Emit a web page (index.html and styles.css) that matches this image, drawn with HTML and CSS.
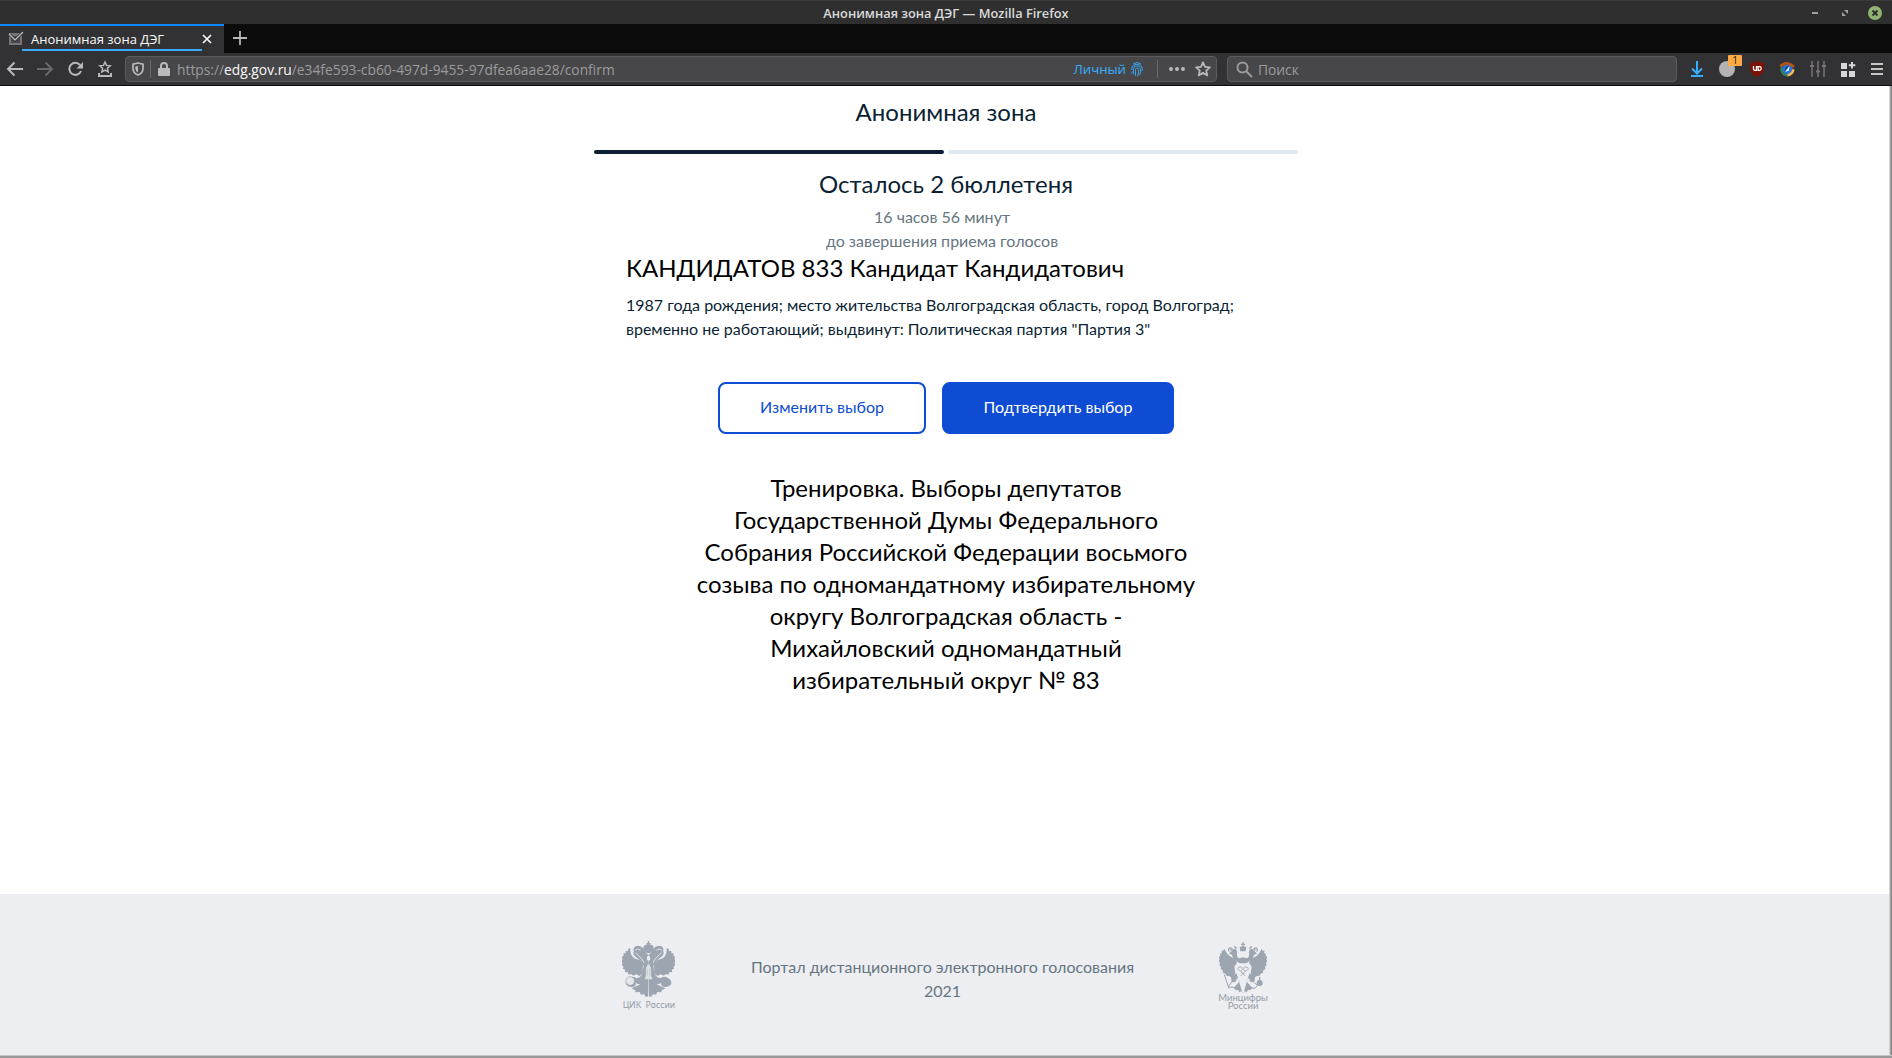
FILE: index.html
```html
<!DOCTYPE html>
<html lang="ru">
<head>
    <meta charset="UTF-8">
    <meta name="viewport" content="width=device-width, initial-scale=1.0">
    <title>Анонимная зона ДЭГ</title>
    <link rel="stylesheet" href="styles.css">
</head>
<body>
    <div class="window">
        <header class="titlebar">
            <span class="window-title">Анонимная зона ДЭГ — Mozilla Firefox</span>
            <div class="window-buttons">
                <svg width="14" height="14" viewBox="-3 0 14 14"><path d="M1 7h6" stroke="#a0a0a0" stroke-width="2"/></svg>
                <svg width="14" height="14" viewBox="-3 0 14 14"><path d="M3 4h4v4zM1 6v4h4z" fill="#a0a0a0"/></svg>
                <svg width="14" height="14" viewBox="0 0 14 14"><circle cx="7" cy="7" r="7" fill="#92b372"/><path d="M4.5 4.5l5 5m0-5l-5 5" stroke="#2b2b2b" stroke-width="1.8"/></svg>
            </div>
        </header>

        <div class="tabbar">
            <div class="tab">
                <svg class="favicon" width="17" height="16" viewBox="0 0 17 16"><path d="M1 2h13v12H1z" fill="#77757a"/><path d="M3 5h9v7H3z" fill="#4a484c"/><path d="M2 4l5 5 7-7" fill="none" stroke="#2a2a2a" stroke-width="3"/><path d="M1 3l6 6 8-8" fill="none" stroke="#b5b5b5" stroke-width="1.5"/></svg>
                <span class="tab-title">Анонимная зона ДЭГ</span>
                <svg width="12" height="12" viewBox="0 0 12 12"><path d="M2 2l8 8m0-8l-8 8" stroke="#f9f9fa" stroke-width="1.7"/></svg>
            </div>
            <svg class="new-tab" width="14" height="14" viewBox="0 0 14 14"><path d="M7 0v14M0 7h14" stroke="#b9b9ba" stroke-width="1.8"/></svg>
        </div>

        <nav class="navbar">
            <div class="nav-buttons">
                <svg width="18" height="16" viewBox="0 0 18 16"><path d="M17 8H2M8.500 1.500L2 8l6.500 6.500" fill="none" stroke="#b9b9ba" stroke-width="2"/></svg>
                <svg width="18" height="16" viewBox="0 0 18 16"><path d="M0 8h15M8.500 1.500L15 8l-6.500 6.500" fill="none" stroke="#68686a" stroke-width="2"/></svg>
                <svg width="16" height="16" viewBox="0 0 16 16"><path d="M12 4A6 6 0 1 0 13 10" fill="none" stroke="#b9b9ba" stroke-width="2"/><path d="M15 1v6.500H8.500z" fill="#b9b9ba"/></svg>
                <svg width="16" height="18" viewBox="0 0 16 18"><path d="M8 2l1.500 3.400 3.700.4-2.800 2.500.8 3.700L8 10.100 4.800 12l.8-3.700-2.800-2.500 3.700-.4z" fill="none" stroke="#b9b9ba" stroke-width="1.500"/><path d="M2 13v3h12v-3" fill="none" stroke="#b9b9ba" stroke-width="2"/></svg>
            </div>
            <div class="urlbar">
                <svg width="12" height="14" viewBox="0 0 12 14"><path d="M6 1l5 1.200v4.300Q11 11 6 13 1 11 1 6.500V2.200z" fill="none" stroke="#b9b9ba" stroke-width="1.700"/><path d="M6 4v6.500Q3.300 9 3.300 6.500V4.500z" fill="#b9b9ba"/></svg>
                <span class="divider"></span>
                <svg width="12" height="14" viewBox="0 0 12 14"><rect y="6" width="12" height="8" rx="1" fill="#b9b9ba"/><path d="M3 7V4a3 3 0 0 1 6 0v3" fill="none" stroke="#b9b9ba" stroke-width="2"/></svg>
                <span class="url">https://<b>edg.gov.ru</b>/e34fe593-cb60-497d-9455-97dfea6aae28/confirm</span>
                <span class="container-label">Личный</span>
                <svg width="12" height="15" viewBox="0 0 12 15" fill="none" stroke="#37adff" stroke-width=".9"><path d="M2 2Q6-1 10 2M.8 8V6.500a5.200 4.200 0 0 1 10.400 0V9M2.500 12.500V6.800a3.500 3 0 0 1 7 0V10l-1 3M4.500 14V7.500a1.500 1.500 0 0 1 3 0V11l-1 3.500M.8 9.500v2"/></svg>
                <span class="divider wide"></span>
                <svg width="16" height="4" viewBox="0 0 16 4" fill="#b9b9ba"><circle cx="2" cy="2" r="2"/><circle cx="8" cy="2" r="2"/><circle cx="14" cy="2" r="2"/></svg>
                <svg class="bookmark" width="16" height="16" viewBox="0 0 16 16"><path d="M8 1.300l2 4.500 4.900.5-3.700 3.300 1.100 4.800L8 11.900l-4.300 2.500 1.100-4.800L1.100 6.300l4.900-.5z" fill="none" stroke="#b9b9ba" stroke-width="1.800" stroke-linejoin="round"/></svg>
            </div>
            <div class="searchbar">
                <svg width="17" height="17" viewBox="0 0 17 17"><circle cx="6.500" cy="6.500" r="5" fill="none" stroke="#9b9b9d" stroke-width="2"/><path d="M10 10l6 6" stroke="#9b9b9d" stroke-width="2"/></svg>
                <span>Поиск</span>
            </div>
            <div class="extensions">
                <svg width="14" height="18" viewBox="0 0 14 18"><path d="M7 1v12M2 8.500l5 5 5-5M1 16h12" fill="none" stroke="#37adff" stroke-width="2"/></svg>
                <span class="blocker">
                    <svg width="16" height="16" viewBox="0 0 16 16"><circle cx="8" cy="8" r="8" fill="#b5b2b5"/></svg>
                    <span class="badge">1</span>
                </span>
                <span class="shield">
                    <svg width="14" height="16" viewBox="0 0 14 16"><path d="M7 0q3 1.500 7 2v5q0 6-7 9-7-3-7-9V2q4-.5 7-2z" fill="#7c1105"/><path d="M3.500 5v3q0 1.300 1.500 1.300h1.500V5M8 5.700h1.500a1.700 1.800 0 0 1 0 3.600H8.200z" fill="none" stroke="#fff" stroke-width="1.300"/></svg>
                </span>
                <svg width="16" height="16" viewBox="0 0 16 16"><circle cx="8.500" cy="8.500" r="5.300" fill="#2a72dc"/><path d="M3 6a6 6 0 0 0 5.500 8.300" fill="none" stroke="#2d8062" stroke-width="2.500"/><path d="M8.500 14.300q5-.5 6-6" fill="none" stroke="#f4b950" stroke-width="2.500"/><path d="M1.500 5.500Q7-1 15 6" fill="none" stroke="#b5531c" stroke-width="2.800"/><path d="M10 4.500L5 11l2-5z" fill="#14375e"/><path d="M10.500 5L6 11l4-1.500z" fill="#e5f3ff"/></svg>
                <svg width="16" height="16" viewBox="0 0 16 16" fill="none" stroke="#77717b" stroke-width="2"><path d="M2 0v16M8 0v16M14 0v16" stroke-width="1.500"/><path d="M0 5h4M6 10.500h4M12 5h4"/></svg>
                <svg width="15" height="15" viewBox="0 0 15 15"><path d="M0 1h6v6H0zM0 9h6v6H0zM8 9h6v6H8z" fill="#d7d7db"/><path d="M11 0v6.500M7.800 3.200h6.500" stroke="#d7d7db" stroke-width="2"/></svg>
                <svg width="12" height="14" viewBox="0 0 12 14"><path d="M0 2h12M0 7h12M0 12h12" stroke="#c5c5c1" stroke-width="2"/></svg>
            </div>
        </nav>

        <main class="page">
            <h1 class="zone-title">Анонимная зона</h1>
            <div class="progress">
                <span class="step active"></span>
                <span class="step"></span>
            </div>
            <h2 class="remaining">Осталось 2 бюллетеня</h2>
            <p class="timer">16 часов 56 минут<br>до завершения приема голосов</p>

            <section class="candidate">
                <h3>КАНДИДАТОВ 833 Кандидат Кандидатович</h3>
                <p>1987 года рождения; место жительства Волгоградская область, город Волгоград;<br>временно не работающий; выдвинут: Политическая партия "Партия 3"</p>
            </section>

            <div class="actions">
                <button class="button outline">Изменить выбор</button>
                <button class="button primary">Подтвердить выбор</button>
            </div>

            <p class="election">Тренировка. Выборы депутатов<br>Государственной Думы Федерального<br>Собрания Российской Федерации восьмого<br>созыва по одномандатному избирательному<br>округу Волгоградская область -<br>Михайловский одномандатный<br>избирательный округ № 83</p>
        </main>

        <footer class="footer">
            <div class="logo cik">
                <svg width="53" height="56" viewBox="0 0 158 168" fill="#9da6b0">
                    <defs>
                        <g id="cik-half">
                            <path d="M79 42Q89 38 95 22q10-12 23-6 8 5 5 15 5 9-5 16L96 64l-2 14 6 24q4 8 14 10 9-9 23-2 13 8 10 20-8 10-23 7-10-4-6-12-7 5-15 5l27 12-13 7 2 5-14-1-3 8-10-1-5 8-7-2z"/>
                            <path d="M95 62l12-6q16-2 22-12 6-10 4-22l7 1 1 8 6-2 1 8 6 0v8l5 2-2 8 4 5-4 6 3 6-6 5 2 6-7 3 1 7-9 1-2 7-8-2-6 5-9-4-11 5-8-9z"/>
                        </g>
                    </defs>
                    <use href="#cik-half"/>
                    <use href="#cik-half" transform="matrix(-1 0 0 1 158 0)"/>
                    <path d="M77 0h4v6h4v4h-4q13 2 14 11-1 11-9 16H72q-8-5-9-16 1-9 14-11h-4V6h4z"/>
                    <path d="M40 35l20 20 5 10M118 35L98 55l-5 10M39 28q7-8 16 0M119 28q-7-8-16 0" fill="none" stroke="#e2e5e9" stroke-width="3"/>
                    <ellipse cx="79" cy="52" rx="5" ry="8" fill="#edeef2"/>
                    <path d="M75 71h8v5q4 2 4 10v20l4 9H67l4-9V86q0-8 4-10z" fill="#dce0e5"/>
                    <path d="M75 82v22M83 82v22" stroke="#b9c0c8" stroke-width="2"/>
                    <circle cx="24" cy="120" r="13" fill="#e3e6ea" stroke="#9da6b0" stroke-width="2"/>
                </svg>
                <span>ЦИК&nbsp; России</span>
            </div>
            <p class="portal">Портал дистанционного электронного голосования<br>2021</p>
            <div class="logo mincifry">
                <svg width="48" height="52" viewBox="0 0 142 156" fill="#9da6b0">
                    <defs>
                        <g id="min-half">
                            <path d="M92 50q22-2 35-29l4 6 4-2v9l5 1-1 8 5 1-3 8 3 4-4 7 2 6-5 5 1 7-6 4-1 7-7 3-3 6-8 1-11 6-8-14 3-20-8-12z"/>
                            <path d="M71 66V46l11 3q9-3 7-14-2-12 8-15 6 0 8 7l8 8-9 3-2 8-18 16z"/>
                            <path d="M92 22q-1-9 6-7M108 26l-4-6q6-5 10 1l-1 8" fill="none" stroke="#9da6b0" stroke-width="4"/>
                            <path d="M90 94l17 12-2 15-11-1-6-12-7 10 18 20-7 7-6-2-4 8-6-4-4 8z"/>
                        </g>
                    </defs>
                    <use href="#min-half"/>
                    <use href="#min-half" transform="matrix(-1 0 0 1 142 0)"/>
                    <path d="M69 0h4v5h4v4h-4v4l8 2-2 13H63l-2-13 8-2V9h-4V5h4z"/>
                    <circle cx="121" cy="123" r="9"/><path d="M119 105h4v10h-4z"/>
                    <path d="M15 98l14 42M105 123l10 6-8 10-15-2M38 119l-12 16 18 1" fill="none" stroke="#9da6b0" stroke-width="3"/>
                    <path d="M52 69q10-1 19-6 9 5 19 6v24q-2 14-19 20-17-6-19-20z" fill="#edeef2"/>
                    <path d="M57 77q12-6 12 3t-10 5q-7-4-2-8zM85 77q-12-6-12 3t10 5q7-4 2-8zM64 102l15-15M78 102L63 87M66 92q5 8 10 0" fill="none" stroke="#9da6b0" stroke-width="2.500"/>
                </svg>
                <span>Минцифры<br>России</span>
            </div>
        </footer>
    </div>
</body>
</html>
```
FILE: styles.css
```css
:root {
    --navy: #0b1f33;
    --blue: #0d4cd3;
    --gray: #66757f;
    --chrome: #323234;
    --field: #474749;
    --edge: linear-gradient(to left, #858585 1px, #a5a5a5 1px, #a5a5a5 2px, #d0d0d0 2px, #d0d0d0 3px, transparent 3px);
}

* {
    box-sizing: border-box;
    margin: 0;
    padding: 0;
}

body {
    font-family: 'Lato', sans-serif;
    background-color: #ffffff;
    color: var(--navy);
}

svg {
    display: block;
    flex-shrink: 0;
}

.window {
    display: flex;
    flex-direction: column;
    height: 100vh;
    overflow: hidden;
    border-bottom: 2px solid #999999;
}

.titlebar,
.tabbar,
.navbar {
    font-family: 'Open Sans', 'Noto Sans', sans-serif;
    flex-shrink: 0;
}

.titlebar {
    display: grid;
    grid-template-columns: 1fr auto 1fr;
    align-items: center;
    height: 24px;
    background-color: #2f2f2f;
    border-top: 1px solid #3b3b3b;
}

.window-title {
    grid-column: 2;
    padding-top: 1px;
    font-size: 12.8px;
    font-weight: 600;
    line-height: 20px;
    color: #dadada;
}

.window-buttons {
    display: flex;
    justify-content: flex-end;
    gap: 16px;
    padding-right: 10px;
}

.tabbar {
    display: flex;
    align-items: center;
    height: 29px;
    padding-bottom: 1px;
    background-color: #0c0c0d;
}

.tab {
    display: flex;
    align-items: center;
    align-self: flex-start;
    flex-shrink: 0;
    width: 224px;
    height: 29px;
    padding: 0 11px 2px 8px;
    background-color: var(--chrome);
    border-top: 2px solid #0a84ff;
    /* container tab line */
    background-image: linear-gradient(#37adff, #37adff);
    background-repeat: no-repeat;
    background-position: 22px 23px;
    background-size: 180px 2px;
}

.tab-title {
    flex: 1;
    margin-left: 6px;
    font-size: 13px;
    color: #f9f9fa;
    white-space: nowrap;
}

.new-tab {
    margin-left: 9px;
}

.navbar {
    display: flex;
    align-items: center;
    height: 33px;
    padding-left: 6px;
    background-color: var(--chrome);
    border-bottom: 1px solid #0c0c0d;
}

.nav-buttons {
    display: flex;
    align-items: center;
    gap: 13px;
    width: 119px;
}

.urlbar,
.searchbar {
    display: flex;
    align-items: center;
    height: 26px;
    font-size: 13.8px;
    background-color: var(--field);
    border: 1px solid #5b5b5d;
    border-radius: 4px;
}

.urlbar {
    width: 1092px;
    padding: 0 5px 0 6px;
}

.divider {
    width: 1px;
    height: 18px;
    margin: 0 7px 0 6px;
    background-color: #6a6a6c;
}

.divider.wide {
    margin: 0 11px 0 14px;
}

.url {
    flex: 1;
    margin-left: 7px;
    color: #9b9b9c;
    white-space: nowrap;
}

.url b {
    font-weight: 400;
    color: #f9f9fa;
}

.container-label {
    margin-right: 5px;
    font-size: 13.2px;
    color: #37adff;
}

.bookmark {
    margin-left: 10px;
}

.searchbar {
    width: 450px;
    margin-left: 10px;
    padding-left: 8px;
    gap: 5px;
    color: #9b9b9c;
}

.extensions {
    display: flex;
    flex: 1;
    justify-content: space-between;
    align-items: center;
    padding: 0 9px 0 13px;
}

.blocker {
    position: relative;
}

.badge {
    position: absolute;
    top: -6px;
    left: 9px;
    width: 14px;
    height: 11px;
    font-size: 10px;
    line-height: 11px;
    text-align: center;
    color: #222222;
    background-color: #ffab45;
    border-radius: 1px;
}

.page {
    display: flex;
    flex-direction: column;
    align-items: center;
    flex: 1;
    padding-top: 10px;
    background-image: var(--edge);
}

.zone-title,
.remaining,
.candidate h3,
.election {
    font-size: 24px;
    font-weight: 400;
    line-height: 32px;
}

.progress {
    display: flex;
    gap: 4px;
    width: 704px;
    margin: 22px 0 14px;
}

.step {
    flex: 1;
    height: 4px;
    border-radius: 2px;
    background-color: #e1e9f1;
}

.step.active {
    background-color: var(--navy);
}

.timer {
    margin-top: 5px;
    padding-right: 8px;
    line-height: 24px;
    text-align: center;
    color: var(--gray);
}

.candidate {
    width: 640px;
    line-height: 24px;
}

.candidate h3 {
    margin: -1px 0 9px;
    color: #000000;
}

.actions {
    display: flex;
    gap: 16px;
    margin: 41px 0 38px;
}

.button {
    height: 52px;
    padding: 0 0 3px;
    font-family: inherit;
    font-size: 16px;
    white-space: nowrap;
    border: 2px solid var(--blue);
    border-radius: 8px;
    cursor: pointer;
}

.button.outline {
    width: 208px;
    color: var(--blue);
    background-color: #ffffff;
}

.button.primary {
    width: 232px;
    color: #ffffff;
    background-color: var(--blue);
}

.election {
    text-align: center;
    color: #000000;
}

.footer {
    display: flex;
    justify-content: center;
    height: 162px;
    padding: 47px 2px 0 0;
    background-color: #edeef2;
    background-image: var(--edge);
    border-bottom: 1px solid #c4c5c8;
}

.logo {
    display: flex;
    flex-direction: column;
    align-items: center;
    color: #929ca7;
    text-align: center;
    white-space: nowrap;
}

.cik {
    width: 54px;
    font-family: 'Noto Sans', sans-serif;
    font-size: 8.7px;
    line-height: 16px;
}

.mincifry {
    width: 50px;
    padding-top: 1px;
    font-size: 9.5px;
    line-height: 7.5px;
}

.portal {
    margin: 14px 84px 0 75px;
    line-height: 24px;
    text-align: center;
    color: var(--gray);
}
```
